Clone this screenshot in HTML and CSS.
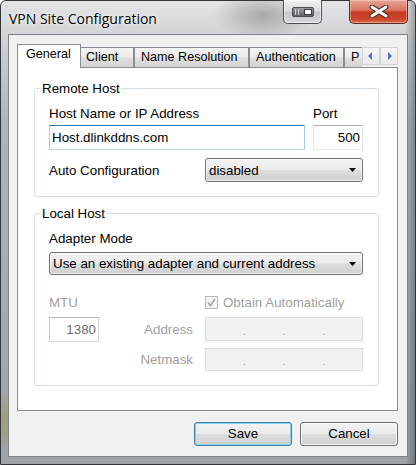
FILE: index.html
```html
<!DOCTYPE html>
<html>
<head>
<meta charset="utf-8">
<title>VPN Site Configuration</title>
<link rel="stylesheet" href="styles.css">
</head>
<body>
<div class="window">
  <div class="titlebar">
    <div class="title">VPN Site Configuration</div>
    <div class="caption">
      <div class="cap-btn cap-tray">
        <svg width="22" height="10" viewBox="0 0 22 10">
          <defs>
            <linearGradient id="tg" x1="0" y1="0" x2="0" y2="1">
              <stop offset="0" stop-color="#9a9ea3"/>
              <stop offset="1" stop-color="#5d6166"/>
            </linearGradient>
          </defs>
          <rect x="0.5" y="0.5" width="21" height="9" rx="1.5" fill="url(#tg)" stroke="#4a4e53"/>
          <rect x="3" y="2" width="1" height="6" fill="#c9ccd0"/>
          <rect x="6" y="2" width="1" height="6" fill="#c9ccd0"/>
          <rect x="12.5" y="2.5" width="7" height="5" fill="#ffffff" stroke="#3d4146"/>
        </svg>
      </div>
      <div class="cap-btn cap-close">
        <svg width="22" height="13" viewBox="0 0 22 13">
          <path d="M4 2 L18 11 M18 2 L4 11" stroke="#3a2a26" stroke-width="5" stroke-linecap="round"/>
          <path d="M4 2 L18 11 M18 2 L4 11" stroke="#ffffff" stroke-width="3" stroke-linecap="round"/>
        </svg>
      </div>
    </div>
  </div>

  <div class="client">
    <div class="tabrow">
      <div class="tabs">
        <div class="tab tab-active tab-general">General</div>
        <div class="tab tab-client">Client</div>
        <div class="tab tab-names">Name Resolution</div>
        <div class="tab tab-auth">Authentication</div>
        <div class="tab tab-last">P</div>
      </div>
      <div class="tabscroll">
        <div class="sbtn">
          <svg width="16" height="16" viewBox="0 0 16 16"><polygon points="9,4 5,8 9,12" fill="#4f6fc4"/></svg>
        </div>
        <div class="sbtn">
          <svg width="16" height="16" viewBox="0 0 16 16"><polygon points="7,4 11,8 7,12" fill="#4f6fc4"/></svg>
        </div>
      </div>
    </div>

    <div class="panel">
      <fieldset class="group">
        <legend>Remote Host</legend>
        <div class="group-body">
          <div class="host-row">
            <div class="host-col">
              <div class="label">Host Name or IP Address</div>
              <div class="edit edit-focus">Host.dlinkddns.com</div>
            </div>
            <div class="port-col">
              <div class="label">Port</div>
              <div class="edit edit-num">500</div>
            </div>
          </div>
          <div class="auto-row">
            <div class="label">Auto Configuration</div>
            <div class="combo combo-auto">
              <span>disabled</span>
              <svg width="7" height="4" viewBox="0 0 7 4"><polygon points="0,0 7,0 3.5,4" fill="#000"/></svg>
            </div>
          </div>
        </div>
      </fieldset>

      <fieldset class="group group-local">
        <legend>Local Host</legend>
        <div class="group-body">
          <div class="label">Adapter Mode</div>
          <div class="combo combo-adapter">
            <span>Use an existing adapter and current address</span>
            <svg width="7" height="4" viewBox="0 0 7 4"><polygon points="0,0 7,0 3.5,4" fill="#000"/></svg>
          </div>
          <div class="addr-grid">
            <div class="label disabled mtu-label">MTU</div>
            <div class="check">
              <svg width="13" height="13" viewBox="0 0 13 13">
                <rect x="0.5" y="0.5" width="12" height="12" fill="#f4f4f4" stroke="#b9b9b9"/>
                <path d="M3 6.5 L5.5 9.5 L10 3" fill="none" stroke="#a8a8a8" stroke-width="1.8"/>
              </svg>
              <span class="disabled">Obtain Automatically</span>
            </div>
            <div class="edit edit-num edit-mtu">1380</div>
            <div class="label disabled addr-label">Address</div>
            <div class="ipfield ip-addr">
              <span class="seg"></span><span class="dot">.</span><span class="seg"></span><span class="dot">.</span><span class="seg"></span><span class="dot">.</span><span class="seg"></span>
            </div>
            <div class="label disabled addr-label mask-label">Netmask</div>
            <div class="ipfield ip-mask">
              <span class="seg"></span><span class="dot">.</span><span class="seg"></span><span class="dot">.</span><span class="seg"></span><span class="dot">.</span><span class="seg"></span>
            </div>
          </div>
        </div>
      </fieldset>
    </div>

    <div class="buttons">
      <div class="btn btn-default">Save</div>
      <div class="btn">Cancel</div>
    </div>
  </div>
</div>
</body>
</html>
```

FILE: styles.css
```css
html, body {
  margin: 0;
  padding: 0;
  background: #ffffff;
}

body {
  font-family: "Liberation Sans", Arial, sans-serif;
  font-size: 13.33px;
  color: #000;
}

.window {
  width: 416px;
  height: 465px;
  box-sizing: border-box;
  border: 1px solid #32363a;
  border-radius: 6px 6px 0 0;
  padding: 0 7px 7px 7px;
  display: flex;
  flex-direction: column;
  background:
    radial-gradient(ellipse 50px 24px at 262px 14px, rgba(70, 70, 70, 0.35), rgba(70, 70, 70, 0) 100%),
    radial-gradient(ellipse 8px 30px at 3px 420px, rgba(160, 150, 40, 0.45), rgba(160, 150, 40, 0) 100%),
    linear-gradient(90deg, rgba(0,0,0,0) 0, rgba(0,0,0,0) 404px, rgba(40,44,48,0.35) 414px),
    linear-gradient(180deg, #e3e4e5 0px, #d2d4d6 33px, #b0b4b7 120px, #9ea3a7 100%);
}

/* ---------- title bar ---------- */
.titlebar {
  height: 33px;
  flex: none;
  display: flex;
  align-items: flex-start;
}

.title {
  margin: 8px 0 0 1px;
  font-family: "Open Sans", "Noto Sans", sans-serif;
  font-size: 14px;
  line-height: 19px;
  color: #000;
  text-shadow: 0 0 6px rgba(255, 255, 255, 0.9), 0 0 2px rgba(255, 255, 255, 0.9);
}

.caption {
  margin-left: auto;
  margin-top: -1px;
  display: flex;
  gap: 27px;
}

.cap-btn {
  height: 24px;
  box-sizing: border-box;
  border: 1px solid #4a4f54;
  border-top: none;
  border-radius: 0 0 5px 5px;
  display: flex;
  align-items: center;
  justify-content: center;
}

.cap-tray {
  width: 39px;
  background: linear-gradient(180deg, #eef0f2 0%, #d9dcdf 48%, #c4c8cc 52%, #d3d7da 100%);
  box-shadow: inset 0 0 0 1px rgba(255, 255, 255, 0.55);
}

.cap-close {
  width: 59px;
  border-color: #5e2b22;
  background: linear-gradient(180deg, #e9a596 0%, #d8735f 45%, #c43a20 52%, #c9432a 80%, #db6a45 100%);
  box-shadow: inset 0 0 0 1px rgba(255, 220, 210, 0.45);
}

/* ---------- client area ---------- */
.client {
  flex: 1;
  box-sizing: border-box;
  border: 1px solid #7c8287;
  background: #f0f0f0;
  padding: 9px 9px 0 8px;
  display: flex;
  flex-direction: column;
}

/* ---------- tabs ---------- */
.tabrow {
  height: 24px;
  margin-bottom: -1px;
  display: flex;
  position: relative;
  z-index: 1;
}

.tabs {
  flex: 1;
  min-width: 0;
  overflow: hidden;
  padding-left: 2px;
  display: flex;
  align-items: flex-end;
}

.tab {
  flex: none;
  box-sizing: border-box;
  height: 20px;
  margin-bottom: 1px;
  padding: 0 6px;
  border: 1px solid #898c95;
  border-bottom: none;
  font-size: 12.6px;
  line-height: 19px;
  white-space: nowrap;
  overflow: hidden;
  background: linear-gradient(180deg, #f4f4f4 0%, #ececec 45%, #dedede 55%, #d3d3d3 100%);
}

.tab-general { width: 60px; }
.tab-client { width: 55px; }
.tab-names { width: 115px; }
.tab-auth { width: 95px; }
.tab-last { width: 60px; }

.tab-active {
  height: 24px;
  margin: 0 -2px;
  padding: 0 8px;
  background: #ffffff;
  position: relative;
  z-index: 2;
}

.tab-active.tab-general {
  width: 64px;
}

.tabscroll {
  flex: none;
  display: flex;
  margin-top: 3px;
  height: 18px;
}

.sbtn {
  width: 18px;
  height: 18px;
  box-sizing: border-box;
  border: 1px solid #d2d2d2;
  background: linear-gradient(180deg, #f6f6f6 0%, #e9e9e9 100%);
  display: flex;
  align-items: center;
  justify-content: center;
}

.panel {
  height: 344px;
  box-sizing: border-box;
  border: 1px solid #898c95;
  background: #ffffff;
  padding: 13px 18px 0 16px;
}

/* ---------- group boxes ---------- */
.group {
  margin: 0;
  padding: 0;
  min-width: 0;
  border: 1px solid #d5dfe5;
  border-radius: 3px;
}

.group legend {
  margin-left: 6px;
  padding: 0 1px;
  line-height: 15px;
}

.group-local {
  margin-top: 9px;
}

.group-body {
  padding: 10px 15px 14px 14px;
}

.label {
  line-height: 15px;
  white-space: nowrap;
}

.disabled {
  color: #a0a0a0;
}

.host-row {
  display: flex;
  gap: 8px;
}

.host-col {
  flex: 1;
  min-width: 0;
}

.port-col {
  width: 50px;
  flex: none;
}

.host-row .label {
  margin-bottom: 4px;
}

.edit {
  box-sizing: border-box;
  height: 25px;
  padding: 0 2px;
  line-height: 23px;
  border: 1px solid;
  border-color: #abadb3 #e2e3ea #e3e9ef #e2e3ea;
  background: #ffffff;
  white-space: nowrap;
}

.edit-focus {
  border-color: #3d7bad #a4c9e3 #b7d9ed #a4c9e3;
}

.edit-num {
  text-align: right;
}

.edit-mtu {
  grid-column: 1;
  grid-row: 2;
  color: #6d6d6d;
  border-color: #b5b8bd #cfd1d6 #d4d7dc #cfd1d6;
}

.auto-row {
  margin-top: 8px;
  display: flex;
  align-items: center;
}

.auto-row .label {
  flex: 1;
}

.combo {
  box-sizing: border-box;
  height: 24px;
  padding: 0 6px 0 3px;
  border: 1px solid #707070;
  border-radius: 3px;
  display: flex;
  align-items: center;
  justify-content: space-between;
  line-height: 15px;
  background: linear-gradient(180deg, #f2f2f2 0%, #ebebeb 48%, #dddddd 52%, #cfcfcf 100%);
  box-shadow: inset 0 0 0 1px rgba(255, 255, 255, 0.7);
  white-space: nowrap;
}

.combo-auto {
  width: 158px;
  flex: none;
}

.combo-adapter {
  height: 23px;
  margin-top: 6px;
}

/* ---------- address grid ---------- */
.addr-grid {
  margin-top: 20px;
  display: grid;
  grid-template-columns: 50px 1fr 158px;
  grid-template-rows: 16px 25px 23px;
  row-gap: 6px;
}

.mtu-label {
  grid-column: 1 / 3;
  grid-row: 1;
}

.check {
  grid-column: 3;
  grid-row: 1;
  display: flex;
  align-items: flex-start;
  gap: 5px;
  line-height: 15px;
}

.check svg {
  margin-top: 1px;
  flex: none;
}

.addr-label {
  grid-column: 2;
  grid-row: 2;
  align-self: center;
  text-align: right;
  padding-right: 12px;
}

.mask-label {
  grid-row: 3;
}

.ipfield {
  box-sizing: border-box;
  border: 1px solid #dadada;
  background: #f2f2f2;
  display: flex;
  align-items: center;
  color: #9a9a9a;
  font-size: 11px;
  line-height: 12px;
}

.ip-addr {
  grid-column: 3;
  grid-row: 2;
  height: 24px;
  align-self: start;
}

.ip-mask {
  grid-column: 3;
  grid-row: 3;
}

.ipfield .seg {
  flex: 1;
}

.ipfield .dot {
  width: 3px;
  text-align: center;
  padding-top: 3px;
}

/* ---------- buttons ---------- */
.buttons {
  margin-top: 11px;
  display: flex;
  justify-content: flex-end;
  gap: 8px;
}

.btn {
  width: 98px;
  height: 24px;
  box-sizing: border-box;
  border: 1px solid #707070;
  border-radius: 3px;
  text-align: center;
  line-height: 22px;
  background: linear-gradient(180deg, #f2f2f2 0%, #ebebeb 48%, #dddddd 52%, #cfcfcf 100%);
  box-shadow: inset 0 0 0 1px rgba(255, 255, 255, 0.75);
}

.btn-default {
  border-color: #3c7fb1;
  box-shadow: inset 0 0 0 1px #7fd4f6;
}
```
